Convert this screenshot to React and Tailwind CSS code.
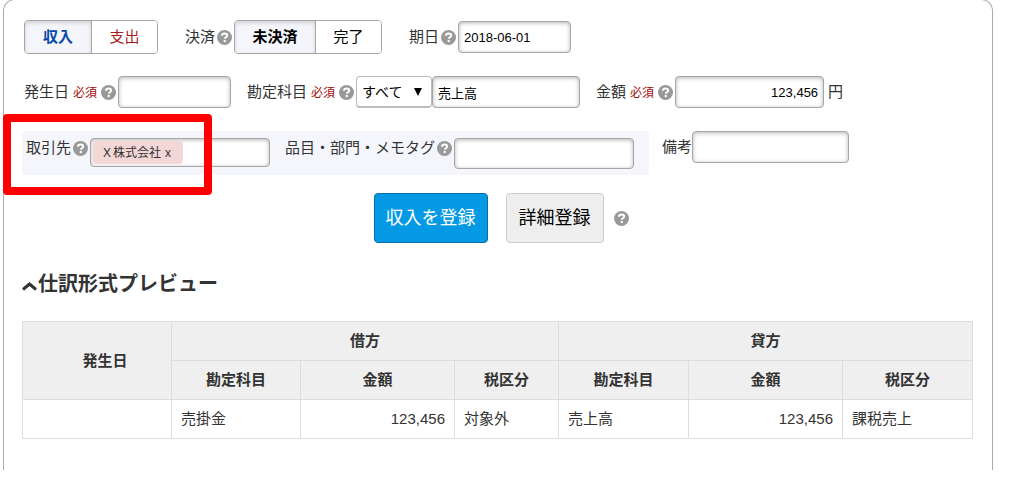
import { useState } from "react";

const boxClass =
  "rounded border border-[#a6a6a6] bg-white text-[13px] text-black shadow-[inset_0_1px_4px_rgba(0,0,0,0.3)] outline-none";
const inputClass = `${boxClass} px-[5px]`;

function Help() {
  return (
    <button type="button" aria-label="ヘルプ" className="mx-[2px] shrink-0">
      <svg viewBox="0 0 15 15" aria-hidden="true" className="size-[15px]">
        <circle cx="7.500" cy="7.500" r="7.500" fill="#999" />
        <path
          d="M4.900 5.700C5 4.300 6 3.500 7.500 3.500s2.700.8 2.700 2.100c0 1.500-2.400 1.500-2.400 3.200"
          fill="none"
          stroke="#fff"
          strokeWidth="2"
        />
        <path d="M6.700 10h2.100v2.100H6.700z" fill="#fff" />
      </svg>
    </button>
  );
}

function Label({ htmlFor, required, children }) {
  return (
    <label htmlFor={htmlFor} className="shrink-0 whitespace-nowrap">
      {children}
      {required && <span className="mr-[2px] ml-1 text-xs text-[#a00d0d]">必須</span>}
    </label>
  );
}

function Segment({ active, wide, activeText, idleText, onClick, children }) {
  return (
    <button
      type="button"
      aria-pressed={active}
      onClick={onClick}
      className={`h-full border-[#a6a6a6] not-first:border-l ${wide ? "w-20" : "w-[66px]"} ${
        active
          ? `bg-[#f4f6fb] font-bold shadow-[inset_0_2px_4px_rgba(0,0,0,0.15)] ${activeText}`
          : `bg-white ${idleText}`
      }`}
    >
      {children}
    </button>
  );
}

function SegmentGroup({ label, children }) {
  return (
    <div
      role="group"
      aria-label={label}
      className="flex h-[34px] shrink-0 overflow-hidden rounded border border-[#a6a6a6]"
    >
      {children}
    </div>
  );
}

function Th({ children, ...rest }) {
  return (
    <th className="h-[39px] border border-[#ddd] bg-[#efefef] px-2 text-center font-bold" {...rest}>
      {children}
    </th>
  );
}

function Td({ right, children }) {
  return (
    <td className={`h-[39px] border border-[#ddd] px-[9px] ${right ? "text-right" : ""}`}>
      {children}
    </td>
  );
}

export default function App() {
  const [kind, setKind] = useState("income");
  const [settled, setSettled] = useState(false);
  const [tagged, setTagged] = useState(true);

  return (
    <div className="bg-white pr-[18px] pb-2 pl-[3px] font-['Liberation_Sans','Noto_Sans_CJK_JP',sans-serif] text-[15px] leading-5 text-[#333]">
      <main className="-mt-px rounded-t-xl border border-b-0 border-[#aaa] pt-5 pr-[19px] pb-[31px] pl-[18px]">
        <form onSubmit={(e) => e.preventDefault()}>
          <div className="flex items-center gap-[27px] pl-[2px]">
            <SegmentGroup label="収支">
              <Segment
                active={kind === "income"}
                activeText="text-[#0848a8]"
                idleText="text-[#0848a8]"
                onClick={() => setKind("income")}
              >
                収入
              </Segment>
              <Segment
                active={kind === "expense"}
                activeText="text-[#a61c1c]"
                idleText="text-[#a61c1c]"
                onClick={() => setKind("expense")}
              >
                支出
              </Segment>
            </SegmentGroup>
            <div className="flex items-center">
              <span>決済</span>
              <Help />
              <SegmentGroup label="決済">
                <Segment
                  wide
                  active={!settled}
                  activeText="text-black"
                  idleText="text-black"
                  onClick={() => setSettled(false)}
                >
                  未決済
                </Segment>
                <Segment
                  active={settled}
                  activeText="text-black"
                  idleText="text-black"
                  onClick={() => setSettled(true)}
                >
                  完了
                </Segment>
              </SegmentGroup>
            </div>
            <div className="flex items-center">
              <Label htmlFor="due">期日</Label>
              <Help />
              <input id="due" defaultValue="2018-06-01" className={`${inputClass} h-8 w-[113px]`} />
            </div>
          </div>

          <div className="mt-[22px] flex items-center gap-4 pl-[2px]">
            <div className="flex items-center">
              <Label htmlFor="date" required>発生日</Label>
              <Help />
              <input id="date" className={`${inputClass} h-8 w-[113px]`} />
            </div>
            <div className="flex items-center">
              <Label htmlFor="account" required>勘定科目</Label>
              <Help />
              <div className="relative">
                <select
                  aria-label="勘定科目の種類"
                  className="block h-8 w-[76px] appearance-none rounded border border-b-2 border-[#bbb] bg-white pl-[5px] text-sm text-black outline-none"
                >
                  <option>すべて</option>
                </select>
                <svg
                  viewBox="0 0 10 10"
                  aria-hidden="true"
                  className="pointer-events-none absolute top-[11px] right-[9px] size-[10px] fill-black"
                >
                  <path d="M1 1h8L5 9z" />
                </svg>
              </div>
              <input id="account" defaultValue="売上高" className={`${inputClass} h-8 w-[148px]`} />
            </div>
            <div className="flex items-center">
              <Label htmlFor="amount" required>金額</Label>
              <Help />
              <input
                id="amount"
                defaultValue="123,456"
                className={`${inputClass} h-8 w-[149px] text-right`}
              />
              <span className="ml-1">円</span>
            </div>
          </div>

          <div className="relative mt-[23px] flex items-start gap-[13px]">
            <div className="flex h-11 items-start gap-[15px] rounded bg-[#f4f6fb] pt-[7px] pr-[15px] pl-1">
              <div className="flex items-start">
                <div className="flex items-center">
                  <Label htmlFor="partner">取引先</Label>
                  <Help />
                </div>
                <div className={`${boxClass} flex h-[29px] w-[180px] items-center px-[2px]`}>
                  {tagged && (
                    <span className="flex h-[23px] shrink-0 items-center gap-1 rounded-sm bg-[#f3d6d6] pr-3 pl-2 text-xs text-[#333]">
                      <span>Ｘ株式会社</span>
                      <button type="button" aria-label="削除" onClick={() => setTagged(false)}>
                        x
                      </button>
                    </span>
                  )}
                  <input id="partner" className="w-full min-w-0 bg-transparent outline-none" />
                </div>
              </div>
              <div className="flex items-start">
                <div className="flex items-center">
                  <Label htmlFor="tags">品目・部門・メモタグ</Label>
                  <Help />
                </div>
                <input id="tags" className={`${inputClass} h-[31px] w-[180px]`} />
              </div>
            </div>
            <div className="flex items-center">
              <Label htmlFor="note">備考</Label>
              <input id="note" className={`${inputClass} h-8 w-[157px]`} />
            </div>
            <div
              aria-hidden="true"
              className="pointer-events-none absolute -top-[17px] -left-[19px] h-[81px] w-[209px] rounded-sm border-8 border-[#f00]"
            />
          </div>

          <div className="mt-[18px] flex items-center justify-center gap-[18px] pl-[9px]">
            <button
              type="submit"
              className="h-[50px] rounded border border-[#0a6da3] bg-[#0499e5] px-[11px] text-lg text-white"
            >
              収入を登録
            </button>
            <div className="flex items-center gap-2">
              <button
                type="button"
                className="h-[50px] rounded border border-[#ccc] bg-[#eee] px-3 text-lg text-black"
              >
                詳細登録
              </button>
              <Help />
            </div>
          </div>
        </form>

        <h2 className="mt-[26px] text-xl leading-[30px] font-bold">
          <button type="button" className="flex items-center">
            <svg
              viewBox="0 0 16 12"
              aria-hidden="true"
              className="mt-1 h-3 w-4 fill-none stroke-[#333] stroke-[3]"
            >
              <path d="M1 9.500 7.500 4l6.500 5.500" />
            </svg>
            仕訳形式プレビュー
          </button>
        </h2>

        <table className="mt-[22px] w-full table-fixed border-collapse">
          <colgroup>
            <col className="w-[149px]" />
            <col className="w-[129px]" />
            <col className="w-[154px]" />
            <col className="w-[104px]" />
            <col className="w-[130px]" />
            <col className="w-[154px]" />
            <col className="w-[130px]" />
          </colgroup>
          <thead>
            <tr>
              <Th rowSpan={2}><span className="pl-4">発生日</span></Th>
              <Th colSpan={3}>借方</Th>
              <Th colSpan={3}>貸方</Th>
            </tr>
            <tr>
              <Th>勘定科目</Th>
              <Th>金額</Th>
              <Th>税区分</Th>
              <Th>勘定科目</Th>
              <Th>金額</Th>
              <Th>税区分</Th>
            </tr>
          </thead>
          <tbody>
            <tr>
              <Td />
              <Td>売掛金</Td>
              <Td right>123,456</Td>
              <Td>対象外</Td>
              <Td>売上高</Td>
              <Td right>123,456</Td>
              <Td>課税売上</Td>
            </tr>
          </tbody>
        </table>
      </main>
    </div>
  );
}
